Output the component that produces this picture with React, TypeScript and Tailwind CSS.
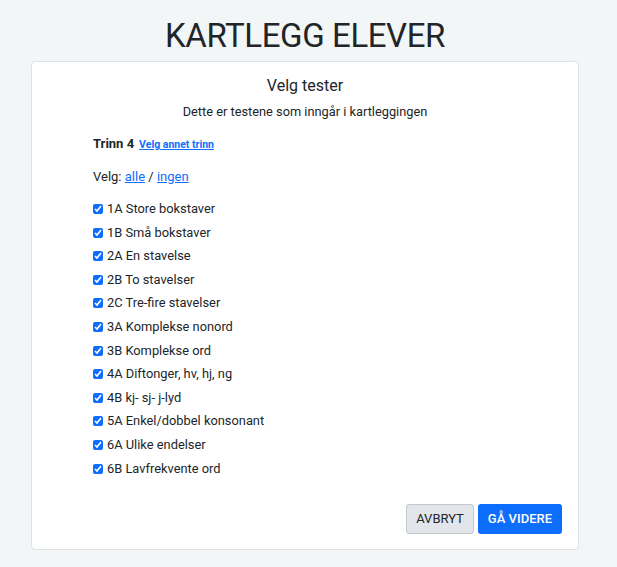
import React, { useState } from 'react';

const TESTS = [
  '1A Store bokstaver',
  '1B Små bokstaver',
  '2A En stavelse',
  '2B To stavelser',
  '2C Tre-fire stavelser',
  '3A Komplekse nonord',
  '3B Komplekse ord',
  '4A Diftonger, hv, hj, ng',
  '4B kj- sj- j-lyd',
  '5A Enkel/dobbel konsonant',
  '6A Ulike endelser',
  '6B Lavfrekvente ord',
];

export default function App() {
  const [checked, setChecked] = useState<boolean[]>(TESTS.map(() => true));

  const toggle = (i: number) =>
    setChecked(prev => prev.map((c, idx) => (idx === i ? !c : c)));

  return (
    <div className="min-h-[567px] bg-[#f3f6f6] text-[#212529] font-['Roboto',sans-serif]">
      <h1 className="pt-[16px] text-center text-[33px] leading-[40px] tracking-[-0.4px] font-normal text-[#212529] w-[548px] ml-[31px]">
        KARTLEGG ELEVER
      </h1>

      <div className="mt-[5px] ml-[31px] w-[548px] h-[489px] bg-white border border-[#dee2e6] rounded-[4px] flex flex-col">
        <div className="pt-[14px] text-center text-[16px] leading-[20px]">Velg tester</div>
        <div className="mt-[6px] text-center text-[12.8px] leading-[20px]">
          Dette er testene som inngår i kartleggingen
        </div>

        <div className="pl-[61px]">
          <div className="mt-[12px] flex items-baseline gap-[5px] text-[13px] leading-[20px]">
            <span className="font-bold">Trinn 4</span>
            <a href="#" className="text-[10.5px] font-bold text-[#0d6efd] underline">
              Velg annet trinn
            </a>
          </div>

          <div className="mt-[12px] text-[13px] leading-[20px]">
            Velg:{' '}
            <a href="#" className="text-[#0d6efd] underline" onClick={e => { e.preventDefault(); setChecked(TESTS.map(() => true)); }}>
              alle
            </a>{' '}
            /{' '}
            <a href="#" className="text-[#0d6efd] underline" onClick={e => { e.preventDefault(); setChecked(TESTS.map(() => false)); }}>
              ingen
            </a>
          </div>

          <div className="mt-[12px] flex flex-col gap-[3.6px]">
            {TESTS.map((t, i) => (
              <label key={t} className="flex items-center gap-[4px] text-[12.85px] leading-[20px]">
                <input
                  type="checkbox"
                  checked={checked[i]}
                  onChange={() => toggle(i)}
                  className="m-0 w-[10px] h-[10px] accent-[#0d6efd]"
                />
                <span>{t}</span>
              </label>
            ))}
          </div>
        </div>

        <div className="mt-auto mb-[15px] mr-[16px] flex justify-end gap-[4px]">
          <button className="h-[30px] px-[9px] bg-[#e2e5e9] border border-[#c4c8cc] rounded-[3px] text-[13px] text-[#212529] uppercase">
            Avbryt
          </button>
          <button className="h-[30px] px-[10px] bg-[#0d6efd] rounded-[3px] text-[13px] font-medium text-white uppercase">
            Gå videre
          </button>
        </div>
      </div>
    </div>
  );
}
